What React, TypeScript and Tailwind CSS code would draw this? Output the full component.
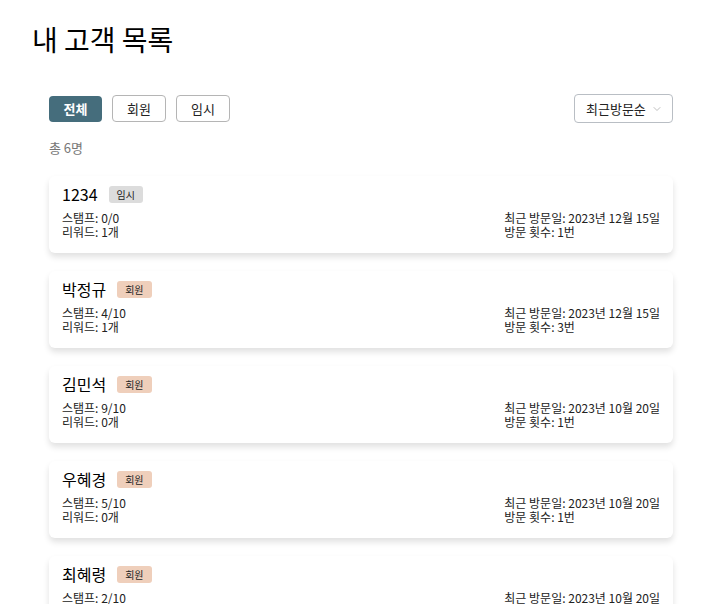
import { ChevronDown } from "lucide-react";

type Customer = {
  name: string;
  type: "회원" | "임시";
  stamp: string;
  reward: string;
  lastVisit: string;
  visits: string;
};

const customers: Customer[] = [
  { name: "1234", type: "임시", stamp: "0/0", reward: "1개", lastVisit: "2023년 12월 15일", visits: "1번" },
  { name: "박정규", type: "회원", stamp: "4/10", reward: "1개", lastVisit: "2023년 12월 15일", visits: "3번" },
  { name: "김민석", type: "회원", stamp: "9/10", reward: "0개", lastVisit: "2023년 10월 20일", visits: "1번" },
  { name: "우혜경", type: "회원", stamp: "5/10", reward: "0개", lastVisit: "2023년 10월 20일", visits: "1번" },
  { name: "최혜령", type: "회원", stamp: "2/10", reward: "0개", lastVisit: "2023년 10월 20일", visits: "1번" },
];

const CustomerCard = ({ c }: { c: Customer }) => {
  return (
    <div className="w-full bg-white rounded-md shadow-[0_4px_6px_rgba(0,0,0,0.12)] px-[13px] pt-[8px] pb-[14px]">
      <div className="flex items-center gap-[11px] h-[20px]">
        <span className="text-[16px] text-black leading-[20px]">{c.name}</span>
        <span
          className={
            c.type === "회원"
              ? "text-[10px] leading-[17px] px-[8px] rounded-[3px] bg-[#efcfbb] text-[#222]"
              : "text-[10px] leading-[17px] px-[8px] rounded-[3px] bg-[#dcdcdc] text-[#222]"
          }
        >
          {c.type}
        </span>
      </div>
      <div className="flex justify-between items-end mt-[7px] text-[12px] leading-[14px] text-[#222]">
        <div className="flex flex-col">
          <span>스탬프: {c.stamp}</span>
          <span>리워드: {c.reward}</span>
        </div>
        <div className="flex flex-col">
          <span>최근 방문일: {c.lastVisit}</span>
          <span>방문 횟수: {c.visits}</span>
        </div>
      </div>
    </div>
  );
};

export default function App() {
  return (
    <div
      className="w-[726px] h-[604px] overflow-hidden bg-white"
      style={{ fontFamily: '"Noto Sans CJK KR", "Noto Sans", sans-serif' }}
    >
      <h1 className="pl-[32px] pt-[19px] text-[28px] leading-[40px] font-normal text-black">
        내 고객 목록
      </h1>
      <div className="px-[49px] pr-[53px] mt-[35px]">
        <div className="flex items-center justify-between">
          <div className="flex items-center gap-[10px]">
            <button className="w-[53px] h-[26px] rounded-[4px] bg-[#456d7c] text-white text-[13px] font-semibold">
              전체
            </button>
            <button className="w-[54px] h-[27px] rounded-[4px] border border-[#b5b5b5] bg-white text-[13px] text-[#222]">
              회원
            </button>
            <button className="w-[54px] h-[27px] rounded-[4px] border border-[#b5b5b5] bg-white text-[13px] text-[#222]">
              임시
            </button>
          </div>
          <button className="flex items-center gap-[5px] h-[29px] w-[99px] pl-[11px] rounded-[4px] border border-[#b9bec4] bg-white text-[13px] text-[#222]">
            최근방문순
            <ChevronDown className="size-[12px] text-[#aaa]" strokeWidth={1.5} />
          </button>
        </div>
        <div className="mt-[16px] text-[13px] text-[#777] leading-[18px]">총 6명</div>
        <div className="flex flex-col gap-[18px] mt-[19px]">
          {customers.map((c) => (
            <CustomerCard key={c.name} c={c} />
          ))}
        </div>
      </div>
    </div>
  );
}
